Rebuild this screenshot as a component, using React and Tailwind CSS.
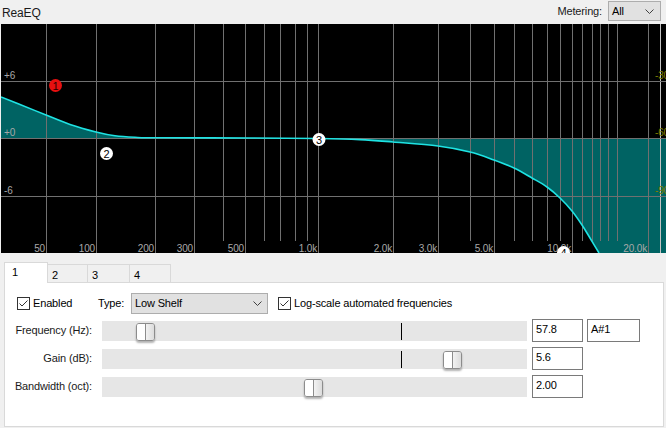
import React from "react";

const majorX = [46, 96, 155, 194, 245, 318, 393, 438, 494, 572, 648];
const minorX = [223, 264, 280, 295, 307, 470, 514, 532, 547, 560, 582, 592, 600, 608, 617];
const freqLabels = [
  [45, "50"],
  [95, "100"],
  [154, "200"],
  [193, "300"],
  [244, "500"],
  [317, "1.0k"],
  [392, "2.0k"],
  [437, "3.0k"],
  [493, "5.0k"],
  [571, "10.0k"],
  [647, "20.0k"],
];

// eq curve, page coordinates
const curve = [
  [1, 97], [20, 104.5], [46, 115], [70, 124.5], [96, 132], [115, 135.8],
  [135, 137.3], [160, 137.8], [250, 138], [318, 138.5], [360, 139.6],
  [393, 142], [438, 146], [470, 152], [494, 160], [514, 168], [532, 178],
  [547, 187], [560, 198], [572, 211], [582, 225], [590, 238], [599, 253],
];

function smooth(pts) {
  let d = `M${pts[0][0]},${pts[0][1]}`;
  for (let i = 0; i < pts.length - 1; i++) {
    const p0 = pts[i - 1] || pts[i];
    const p1 = pts[i];
    const p2 = pts[i + 1];
    const p3 = pts[i + 2] || p2;
    const c1 = [p1[0] + (p2[0] - p0[0]) / 6, p1[1] + (p2[1] - p0[1]) / 6];
    const c2 = [p2[0] - (p3[0] - p1[0]) / 6, p2[1] - (p3[1] - p1[1]) / 6];
    d += ` C${c1[0]},${c1[1]} ${c2[0]},${c2[1]} ${p2[0]},${p2[1]}`;
  }
  return d;
}

const curvePath = smooth(curve);
const fillPath = `M1,138 L1,97 ${curvePath.slice(curvePath.indexOf("C"))} L666,253 L666,138 Z`;

const Handle = ({ x, y, n, red }) => (
  <g>
    <circle cx={x} cy={y} r="6.5" fill={red ? "#e81010" : "#ffffff"} />
    <text
      x={x}
      y={y + 4}
      textAnchor="middle"
      fontSize="11"
      fontFamily="Liberation Sans, Arial, sans-serif"
      fill={red ? "#2a0000" : "#000"}
    >
      {n}
    </text>
  </g>
);

const Graph = () => (
  <svg width="665" height="229" viewBox="1 24 665 229" className="block ml-[1px]">
    <rect x="1" y="24" width="665" height="229" fill="#000" />
    <path d={fillPath} fill="#006363" fillRule="evenodd" />
    {majorX.map((x) => (
      <line key={x} x1={x + 0.5} y1="24" x2={x + 0.5} y2="253" stroke="#707070" />
    ))}
    {minorX.map((x) => (
      <line key={x} x1={x + 0.5} y1="24" x2={x + 0.5} y2="241" stroke="#707070" />
    ))}
    <line x1="660.5" y1="24" x2="660.5" y2="253" stroke="#c4c4c4" />
    {[81, 138, 196].map((y) => (
      <line key={y} x1="1" y1={y + 0.5} x2="666" y2={y + 0.5} stroke="#707070" />
    ))}
    <path d={curvePath} fill="none" stroke="#1ee3e3" strokeWidth="1.6" />
    <g fontFamily="Liberation Sans, Arial, sans-serif" fontSize="10" fill="#a8a8a8">
      <text x="4" y="79">+6</text>
      <text x="4" y="136">+0</text>
      <text x="4" y="194">-6</text>
      {freqLabels.map(([x, t]) => (
        <text key={t} x={x} y="252" textAnchor="end">
          {t}
        </text>
      ))}
    </g>
    <g fontFamily="Liberation Sans, Arial, sans-serif" fontSize="10" fill="#808000">
      <text x="655" y="79">-30</text>
      <text x="655" y="136">-60</text>
      <text x="655" y="194">-90</text>
    </g>
    <Handle x={55.5} y={85.5} n="1" red />
    <Handle x={106.5} y={153.5} n="2" />
    <Handle x={319} y={139.5} n="3" />
    <Handle x={563.5} y={252.5} n="4" />
  </svg>
);

const Chevron = () => (
  <svg width="9" height="5" viewBox="0 0 9 5">
    <path d="M0.5 0.5 L4.5 4.5 L8.5 0.5" fill="none" stroke="#404040" strokeWidth="1" />
  </svg>
);

const Checkbox = () => (
  <svg width="13" height="13" viewBox="0 0 13 13" className="shrink-0">
    <rect x="0.5" y="0.5" width="12" height="12" fill="#fff" stroke="#333" />
    <path d="M2.5 6.5 L5 9 L10.5 3.5" fill="none" stroke="#333" strokeWidth="1" />
  </svg>
);

const Thumb = ({ pos }) => (
  <div
    className={`absolute top-[2px] ${pos} flex h-[18px] w-[19px] overflow-hidden rounded-[3px] border border-[#8c8c8c] shadow-[0_2px_2px_rgba(0,0,0,0.3)]`}
  >
    <div className="w-[8px] bg-white" />
    <div className="w-px bg-[#8c8c8c]" />
    <div className="flex-1 bg-gradient-to-r from-[#f2f2f2] to-[#dcdcdc]" />
  </div>
);

const rows = [
  { label: "Frequency (Hz):", pos: "left-[34px]", tick: true, value: "57.8", note: "A#1" },
  { label: "Gain (dB):", pos: "left-[341px]", tick: true, value: "5.6" },
  { label: "Bandwidth (oct):", pos: "left-[202px]", tick: false, value: "2.00" },
];

const Field = ({ children, w }) => (
  <div className={`${w} h-[23px] border border-[#7a7a7a] bg-white pl-[3px] leading-[19px]`}>
    {children}
  </div>
);

export default function App() {
  return (
    <div className="w-[666px] h-[428px] overflow-hidden bg-[#f0f0f0] text-[11px] tracking-[-0.15px] text-black font-['Liberation_Sans',Arial,sans-serif]">
      <div className="flex h-[24px] items-start justify-between">
        <span className="ml-[2px] mt-[4px] text-[12px] text-[#1a1a1a]">ReaEQ</span>
        <div className="mr-[5px] mt-[1px] flex items-center">
          <span className="mr-[6px] text-[#1a1a1a]">Metering:</span>
          <div className="flex h-[20px] w-[53px] items-center justify-between border border-[#adadad] bg-[#e1e1e1] pl-[3px] pr-[6px]">
            <span>All</span>
            <Chevron />
          </div>
        </div>
      </div>

      <Graph />

      <div className="mt-[9px] ml-[4px] flex h-[20px] items-end">
        <div className="relative z-10 -mb-px h-[21px] w-[44px] border border-b-0 border-[#d9d9d9] bg-white pl-[7px] pt-[2px] leading-[14px]">
          1
        </div>
        {["2", "3", "4"].map((t, i) => (
          <div
            key={t}
            className={`h-[18px] border border-b-0 border-l-0 border-[#d9d9d9] pl-[4px] pt-[3px] leading-[14px] ${
              i === 0 ? "w-[40px]" : i === 1 ? "w-[42px]" : "w-[41px]"
            }`}
          >
            {t}
          </div>
        ))}
      </div>

      <div className="ml-[4px] h-[145px] w-[660px] border border-[#d9d9d9] bg-white">
        <div className="mt-[10px] flex h-[21px] items-center pl-[12px]">
          <Checkbox />
          <span className="ml-[3px] w-[65px]">Enabled</span>
          <span className="w-[33px]">Type:</span>
          <div className="flex h-[21px] w-[137px] items-center justify-between border border-[#adadad] bg-[#e1e1e1] pl-[3px] pr-[5px]">
            <span>Low Shelf</span>
            <Chevron />
          </div>
          <div className="ml-[10px]">
            <Checkbox />
          </div>
          <span className="ml-[3px]">Log-scale automated frequencies</span>
        </div>

        <div className="mt-[5px] flex flex-col gap-[5px]">
          {rows.map((r) => (
            <div key={r.label} className="flex h-[23px] items-center">
              <span className="w-[87px] text-right text-[#1a1a1a]">{r.label}</span>
              <div className="relative ml-[10px] h-[20px] w-[425px] bg-[#e6e6e6]">
                {r.tick && <div className="absolute left-[299px] top-[2px] h-[17px] w-px bg-black" />}
                <Thumb pos={r.pos} />
              </div>
              <div className="ml-[5px]">
                <Field w="w-[51px]">{r.value}</Field>
              </div>
              {r.note && (
                <div className="ml-[4px]">
                  <Field w="w-[53px]">{r.note}</Field>
                </div>
              )}
            </div>
          ))}
        </div>
      </div>
    </div>
  );
}
